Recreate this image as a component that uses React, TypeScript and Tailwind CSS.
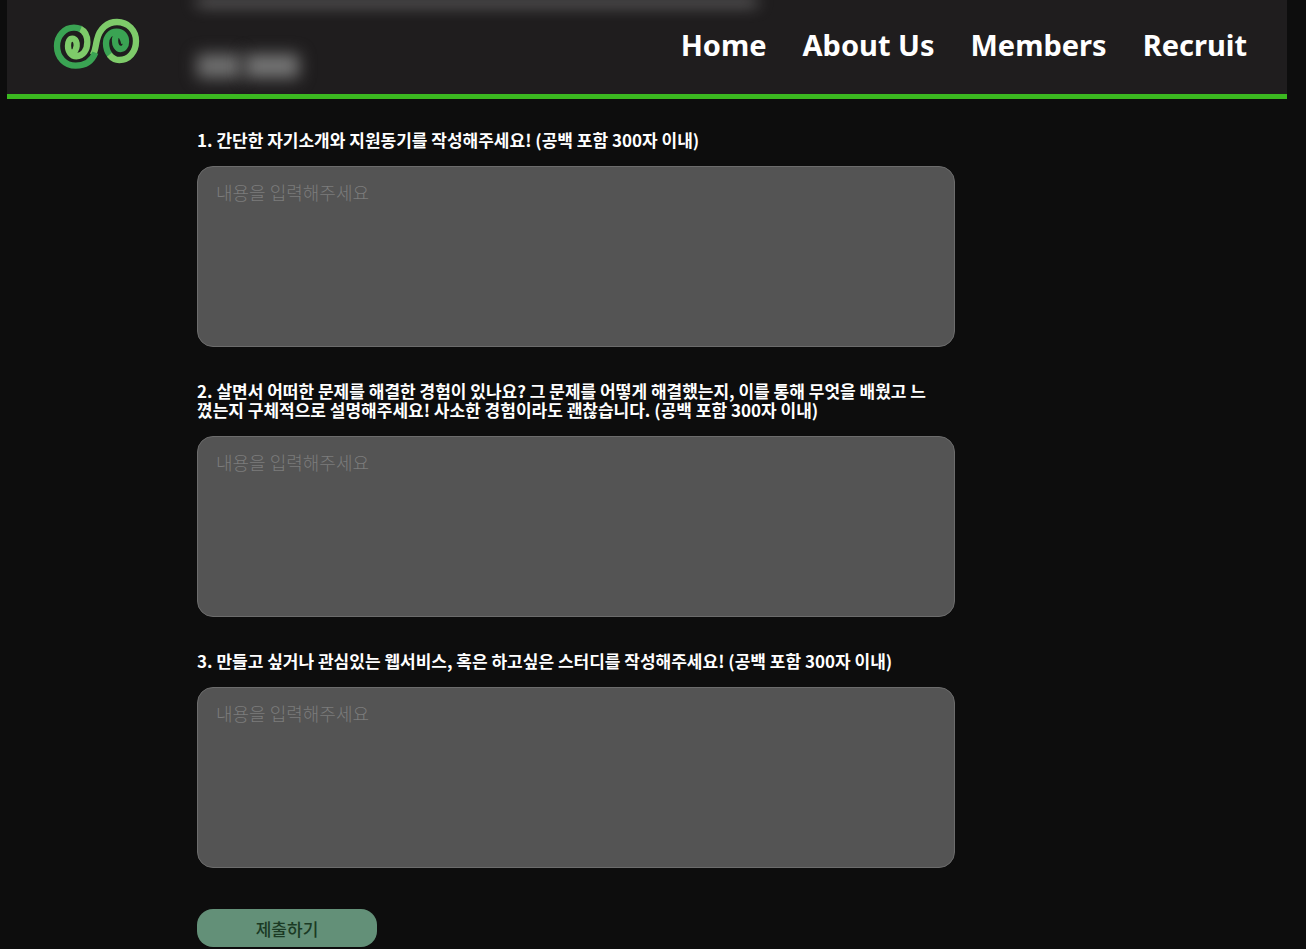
import React, { useState } from "react";

interface Question {
  id: string;
  label: string;
}

const NAV_ITEMS = ["Home", "About Us", "Members", "Recruit"];

const QUESTIONS: Question[] = [
  { id: "intro", label: "1. 간단한 자기소개와 지원동기를 작성해주세요! (공백 포함 300자 이내)" },
  {
    id: "experience",
    label:
      "2. 살면서 어떠한 문제를 해결한 경험이 있나요? 그 문제를 어떻게 해결했는지, 이를 통해 무엇을 배웠고 느꼈는지 구체적으로 설명해주세요! 사소한 경험이라도 괜찮습니다. (공백 포함 300자 이내)",
  },
  { id: "study", label: "3. 만들고 싶거나 관심있는 웹서비스, 혹은 하고싶은 스터디를 작성해주세요! (공백 포함 300자 이내)" },
];

function Logo() {
  return (
    <svg viewBox="40 54 261 156" className="h-[52px] w-[87px]" fill="none" strokeWidth="19">
      {/* left spiral, light inner part */}
      <path
        d="M121 86 C136 94 143 108 143 126 C143 150 130 169 110 169 C95 169 85 155 85 138 C85 124 90 116 98 116 C109 116 112 130 111 138 C110 149 106 155 98 159"
        stroke="#7ecb6a"
      />
      {/* right spiral, dark inner part */}
      <path
        d="M211 166 C202 155 199 143 199 130 C199 110 212 95 231 95 C249 95 259 109 259 125 C259 138 252 147 243 147 C232 147 226 134 226 122 C226 114 228 107 234 103 C244 101 251 116 254 130"
        stroke="#3aa353"
      />
      <path
        d="M159 166 C168 152 167 139 172 119 C180 86 203 66 232 66 C266 66 289 92 289 123 C289 156 268 180 239 180 C227 180 217 174 209 164"
        stroke="#7ecb6a"
      />
      <path
        d="M123 87 C116 84 110 83 103 83 C74 83 52 108 52 138 C52 173 77 197 108 197 C136 197 157 184 167 158"
        stroke="#3aa353"
      />
    </svg>
  );
}

function Header() {
  return (
    <header className="relative ml-[7px] mr-[19px] flex h-[99px] items-center justify-between overflow-hidden border-b-[5px] border-[#3bb820] bg-[#1f1d1e] pb-[6px] pl-[46px] pr-10">
      <div aria-hidden="true" className="absolute inset-0 pl-[190px]">
        <div className="h-1 w-[560px] bg-[#c4c4c4] blur-[8px]" />
        <div className="flex gap-1 pt-[50px]">
          <div className="h-6 w-11 bg-[#707070] blur-[8px]" />
          <div className="h-6 w-[54px] bg-[#767676] blur-[8px]" />
        </div>
      </div>

      <a href="#home" aria-label="Home" className="relative">
        <Logo />
      </a>
      <nav className="relative flex gap-9 pt-[2px] font-['Noto_Sans',sans-serif] text-[29px] font-bold leading-9 text-white">
        {NAV_ITEMS.map((item) => (
          <a key={item} href="#">
            {item}
          </a>
        ))}
      </nav>
    </header>
  );
}

export default function App() {
  const [answers, setAnswers] = useState<Record<string, string>>({});

  function handleChange(id: string, value: string) {
    setAnswers((prev) => ({ ...prev, [id]: value }));
  }

  return (
    <div className="min-h-screen bg-[#0d0d0d] font-['Noto_Sans_CJK_KR',sans-serif]">
      <Header />
      <form
        onSubmit={(e) => e.preventDefault()}
        className="ml-[197px] mr-8 flex max-w-[758px] flex-col gap-[34px] pb-[2px] pt-[31px]"
      >
        {QUESTIONS.map((q) => (
          <div key={q.id} className="flex flex-col gap-[17px]">
            <label
              htmlFor={q.id}
              className="w-[97%] break-all text-[17px] font-bold leading-[19px] text-white"
            >
              {q.label}
            </label>
            <textarea
              id={q.id}
              maxLength={300}
              placeholder="내용을 입력해주세요"
              value={answers[q.id] ?? ""}
              onChange={(e) => handleChange(q.id, e.target.value)}
              className="h-[181px] resize-none rounded-2xl border border-[#6c6c6c] bg-[#545454] px-[18px] py-[14px] text-[18px] font-light leading-[22px] text-white placeholder:text-[#7c7c7c]"
            />
          </div>
        ))}
        <button
          type="submit"
          className="mt-[7px] h-[38px] w-[180px] rounded-2xl bg-[#639078] text-[17px] font-medium leading-[19px] text-[#1b3a24]"
        >
          제출하기
        </button>
      </form>
    </div>
  );
}
